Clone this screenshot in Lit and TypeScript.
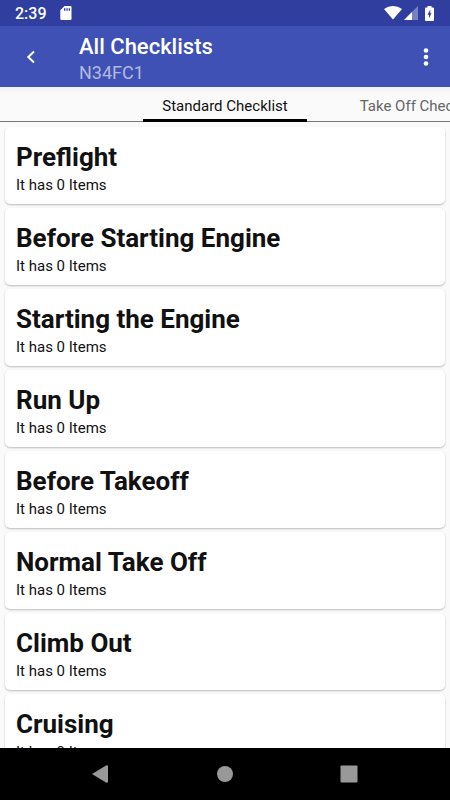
import { LitElement, html, css } from "lit";
import { customElement, property } from "lit/decorators.js";

const CHECKLISTS = [
  "Preflight",
  "Before Starting Engine",
  "Starting the Engine",
  "Run Up",
  "Before Takeoff",
  "Normal Take Off",
  "Climb Out",
  "Cruising",
];

@customElement("status-bar")
export class StatusBar extends LitElement {
  static styles = css`
    :host {
      display: flex;
      align-items: center;
      height: 26px;
      flex: none;
      padding: 0 16px 0 15px;
      background: #303f9f;
      color: #fff;
      font-size: 16px;
      font-weight: 500;
    }
    svg { display: block; fill: #fff; }
    .card { margin-left: 13px; }
    .right { display: flex; align-items: center; margin-left: auto; }
    .signal { margin: 0 7px 0 2px; }
  `;
  render() {
    return html`
      <span>2:39</span>
      <svg class="card" width="12" height="14" viewBox="0 0 12 14">
        <path fill-rule="evenodd" d="M4.500 0H10.500Q11.500 0 11.500 1V13Q11.500 14 10.500 14H1.300Q.3 14 .3 13V4.300ZM4 2.200V4.700H5.400V2.200ZM6.400 2.200V4.700H7.700V2.200ZM8.700 2.200V4.700H10V2.200Z" />
      </svg>
      <div class="right">
        <svg width="18" height="14" viewBox="0 0 18 14">
          <path d="M0 3Q4 0 9 0T18 3L9 13.500Z" />
        </svg>
        <svg class="signal" width="14" height="14" viewBox="0 0 14 14">
          <path opacity=".35" d="M14 0V14H0Z" />
          <path d="M8 6V14H0Z" />
        </svg>
        <svg width="9" height="15" viewBox="0 0 9 15">
          <path fill-rule="evenodd" d="M2.500 0H6.500V1.500H8Q9 1.500 9 2.500V14Q9 15 8 15H1Q0 15 0 14V2.500Q0 1.500 1 1.500H2.500ZM5.300 3.500L2.500 8.800H4V12.300L6.500 7.200H5.300Z" />
        </svg>
      </div>
    `;
  }
}

@customElement("app-bar")
export class AppBar extends LitElement {
  @property() heading = "";
  @property() subheading = "";
  static styles = css`
    :host {
      display: flex;
      align-items: center;
      height: 61px;
      flex: none;
      background: #3f51b5;
      color: #fff;
    }
    button {
      display: grid;
      place-items: center;
      width: 48px;
      height: 48px;
      padding: 0;
      border: 0;
      background: none;
      color: inherit;
    }
    .back { margin: 0 24px 0 7px; }
    .titles { flex: 1; min-width: 0; padding-top: 4px; }
    h1, p { margin: 0; }
    h1 { font-size: 22px; line-height: 28px; font-weight: 500; }
    p { font-size: 18px; line-height: 24px; color: #b2b9e1; }
  `;
  render() {
    return html`
      <button class="back" aria-label="Back">
        <svg width="10" height="14" viewBox="0 0 10 14">
          <path d="M8 1.500L2.300 7L8 12.500" fill="none" stroke="currentColor" stroke-width="2" />
        </svg>
      </button>
      <div class="titles">
        <h1>${this.heading}</h1>
        <p>${this.subheading}</p>
      </div>
      <button aria-label="More options">
        <svg width="6" height="20" viewBox="0 0 6 20" fill="currentColor">
          <circle cx="3" cy="3.500" r="2.300" />
          <circle cx="3" cy="10" r="2.300" />
          <circle cx="3" cy="16.500" r="2.300" />
        </svg>
      </button>
    `;
  }
}

@customElement("tab-strip")
export class TabStrip extends LitElement {
  static styles = css`
    :host {
      display: grid;
      grid-template-columns: minmax(0, 1fr) auto minmax(0, 1fr);
      height: 35px;
      flex: none;
      overflow: hidden;
      background: linear-gradient(#f0f0f0, #fafafa 6px);
      box-shadow: inset 0 -1px #777;
    }
    button {
      padding: 5px 0 0;
      border: 0;
      border-bottom: 3px solid transparent;
      background: none;
      font: inherit;
      font-size: 15px;
      line-height: 24px;
      white-space: nowrap;
      color: #666;
    }
    .current {
      grid-column: 2;
      padding-left: 19px;
      padding-right: 19px;
      border-color: #000;
      color: #111;
    }
    .next {
      justify-self: start;
      padding-left: 53px;
    }
  `;
  render() {
    return html`
      <button class="current" role="tab" aria-selected="true">Standard Checklist</button>
      <button class="next" role="tab" aria-selected="false">Take Off Checklist</button>
    `;
  }
}

@customElement("nav-bar")
export class NavBar extends LitElement {
  static styles = css`
    :host {
      display: flex;
      justify-content: center;
      align-items: center;
      gap: 76px;
      height: 52px;
      flex: none;
      background: #000;
    }
    button {
      display: grid;
      place-items: center;
      width: 48px;
      height: 48px;
      padding: 0;
      border: 0;
      background: none;
    }
    svg { fill: #999; }
  `;
  render() {
    return html`
      <button aria-label="Back">
        <svg width="18" height="18" viewBox="1 0 18 18"><path d="M1 9L15 .4Q17 0 17 1V17Q17 18 15 17.600Z" /></svg>
      </button>
      <button aria-label="Home">
        <svg width="18" height="18" viewBox="0 0 18 18"><circle cx="9" cy="9" r="8" /></svg>
      </button>
      <button aria-label="Recent apps">
        <svg width="18" height="18" viewBox="0 0 18 18"><rect x=".5" y=".5" width="17" height="17" rx="1" /></svg>
      </button>
    `;
  }
}

@customElement("app-root")
export class AppRoot extends LitElement {
  static styles = css`
    :host {
      display: flex;
      flex-direction: column;
      height: 100vh;
      background: #fafafa;
      font-family: Roboto, "Liberation Sans", sans-serif;
      color: #111;
    }
    main {
      flex: 1;
      min-height: 0;
      overflow: hidden;
    }
    ul {
      display: grid;
      gap: 4px;
      margin: 0;
      padding: 5px;
      list-style: none;
    }
    li {
      padding: 13px 11px 8px;
      border-radius: 5px;
      background: #fff;
      box-shadow: 0 1px 2px rgba(0, 0, 0, 0.25);
    }
    h2, p { margin: 0; }
    h2 { font-size: 26px; line-height: 34px; font-weight: 700; }
    p { font-size: 15px; line-height: 22px; }
  `;
  render() {
    return html`
      <status-bar></status-bar>
      <app-bar heading="All Checklists" subheading="N34FC1"></app-bar>
      <tab-strip role="tablist"></tab-strip>
      <main>
        <ul>
          ${CHECKLISTS.map((name) => html`<li><h2>${name}</h2><p>It has 0 Items</p></li>`)}
        </ul>
      </main>
      <nav-bar></nav-bar>
    `;
  }
}
